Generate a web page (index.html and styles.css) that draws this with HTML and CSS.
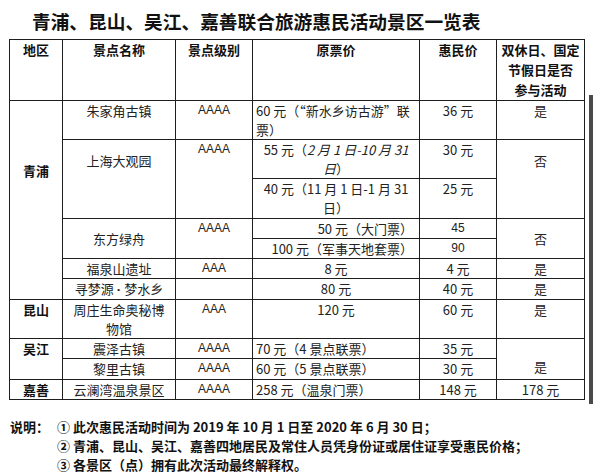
FILE: index.html
```html
<!DOCTYPE html>
<html lang="zh-CN">
<head>
<meta charset="utf-8">
<title>景区一览表</title>
<link rel="stylesheet" href="styles.css">
</head>
<body>
<div class="page">
  <h1 class="title">青浦、昆山、吴江、嘉善联合旅游惠民活动景区一览表</h1>
  <div class="table-wrap">
    <table class="grid">
      <colgroup>
        <col class="c1"><col class="c2"><col class="c3"><col class="c4"><col class="c5"><col class="c6">
      </colgroup>
      <thead>
        <tr class="h-head">
          <th>地区</th><th>景点名称</th><th>景点级别</th><th>原票价</th><th>惠民价</th><th class="wrap3">双休日、国定<br>节假日是否<br>参与活动</th>
        </tr>
      </thead>
      <tbody>
        <tr class="h39">
          <td rowspan="7" class="region qp">青浦</td>
          <td>朱家角古镇</td><td class="lv">AAAA</td>
          <td class="left">60 元（“新水乡访古游”联<br>票）</td><td>36 元</td><td>是</td>
        </tr>
        <tr class="h39">
          <td rowspan="2" class="pad12">上海大观园</td><td rowspan="2" class="lv">AAAA</td>
          <td>55 元（<i>2 月 1 日-10 月 31<br>日</i>）</td><td>30 元</td><td rowspan="2" class="pad12">否</td>
        </tr>
        <tr class="h40">
          <td>40 元（11 月 1 日-1 月 31<br>日）</td><td>25 元</td>
        </tr>
        <tr class="h20">
          <td rowspan="2" class="vmid">东方绿舟</td><td rowspan="2" class="lv">AAAA</td>
          <td class="right">50 元（大门票）</td><td class="lv">45</td><td rowspan="2" class="vmid">否</td>
        </tr>
        <tr class="h20">
          <td class="right">100 元（军事天地套票）</td><td class="lv">90</td>
        </tr>
        <tr class="h20">
          <td>福泉山遗址</td><td class="lv">AAA</td><td>8 元</td><td>4 元</td><td>是</td>
        </tr>
        <tr class="h20">
          <td>寻梦源<span class="dot">·</span>梦水乡</td><td class="lv"></td><td>80 元</td><td>40 元</td><td>是</td>
        </tr>
        <tr class="h38">
          <td class="region">昆山</td><td>周庄生命奥秘博<br>物馆</td><td class="lv">AAA</td><td>120 元</td><td>60 元</td><td>是</td>
        </tr>
        <tr class="h20">
          <td rowspan="2" class="region">吴江</td><td>震泽古镇</td><td class="lv">AAAA</td>
          <td class="left">70 元（4 景点联票）</td><td>35 元</td><td rowspan="2" class="pad20">是</td>
        </tr>
        <tr class="h21">
          <td>黎里古镇</td><td class="lv">AAAA</td><td class="left">60 元（5 景点联票）</td><td>30 元</td>
        </tr>
        <tr class="h20">
          <td class="region">嘉善</td><td>云澜湾温泉景区</td><td class="lv">AAAA</td>
          <td class="left">258 元（温泉门票）</td><td>148 元</td><td>178 元</td>
        </tr>
      </tbody>
    </table>
  </div>
  <div class="notes">
    <div class="notes-label">说明：</div>
    <ol class="notes-list">
      <li>① 此次惠民活动时间为 2019 年 10 月 1 日至 2020 年 6 月 30 日；</li>
      <li>② 青浦、昆山、吴江、嘉善四地居民及常住人员凭身份证或居住证享受惠民价格；</li>
      <li>③ 各景区（点）拥有此次活动最终解释权。</li>
    </ol>
  </div>
</div>
</body>
</html>
```

FILE: styles.css
```css
* { box-sizing: border-box; }
html, body {
  margin: 0;
  padding: 0;
  background: #ffffff;
}
body {
  font-family: "Noto Sans CJK SC", "Liberation Sans", sans-serif;
  color: #222;
  width: 600px;
  height: 473px;
  overflow: hidden;
}
.page {
  padding: 10px 0 0 9px;
}
.title {
  margin: 0 0 7px 23px;
  font-size: 18.7px;
  line-height: 22px;
  font-weight: 700;
  color: #111;
  letter-spacing: 0;
}
.table-wrap {
  position: relative;
  width: 575px;
}
.table-wrap::after {
  content: "";
  position: absolute;
  left: 580px;
  top: 56px;
  bottom: -4px;
  width: 4px;
  background: #4a4a4a;
}
.grid {
  border-collapse: collapse;
  table-layout: fixed;
  width: 575px;
  font-size: 13px;
  line-height: 19px;
}
.c1 { width: 53px; }
.c2 { width: 113px; }
.c3 { width: 77px; }
.c4 { width: 167px; }
.c5 { width: 77px; }
.c6 { width: 88px; }

.grid th, .grid td {
  border: 1px solid #1e1e1e;
  padding: 0 4px;
  vertical-align: top;
  text-align: center;
  overflow: hidden;
}
.grid th {
  font-weight: 700;
  color: #111;
  line-height: 20px;
  padding-top: 0;
}
.grid th.wrap3 { padding: 0 2px; }
.h-head { height: 59px; }
.h39 { height: 39px; }
.h40 { height: 40px; }
.h38 { height: 38px; }
.h21 { height: 21px; }
.h20 { height: 20px; }

.grid td.region {
  font-weight: 700;
  color: #111;
}
.grid td.qp { padding-top: 60px; }
.grid td.pad12 { padding-top: 11px; }
.grid td.pad20 { padding-top: 18px; }
.grid td.vmid { vertical-align: middle; }
.grid td.lv {
  font-family: "Liberation Sans", sans-serif;
  font-size: 12px;
}
.grid td.left { text-align: left; padding-left: 3px; padding-right: 2px; }
.grid td.right { text-align: right; padding-right: 6px; }
.grid td:nth-child(2) { padding-left: 8px; padding-right: 8px; }
.grid i { font-style: italic; }
.dot { font-family: "Liberation Sans", sans-serif; font-weight: 700; padding: 0 3px; }

.notes {
  display: flex;
  margin-top: 17px;
  font-weight: 700;
  font-size: 13px;
  line-height: 19px;
  color: #111;
}
.notes-label {
  width: 48px;
  padding-left: 1px;
}
.notes-list {
  list-style: none;
  margin: 0;
  padding: 0;
}
```
